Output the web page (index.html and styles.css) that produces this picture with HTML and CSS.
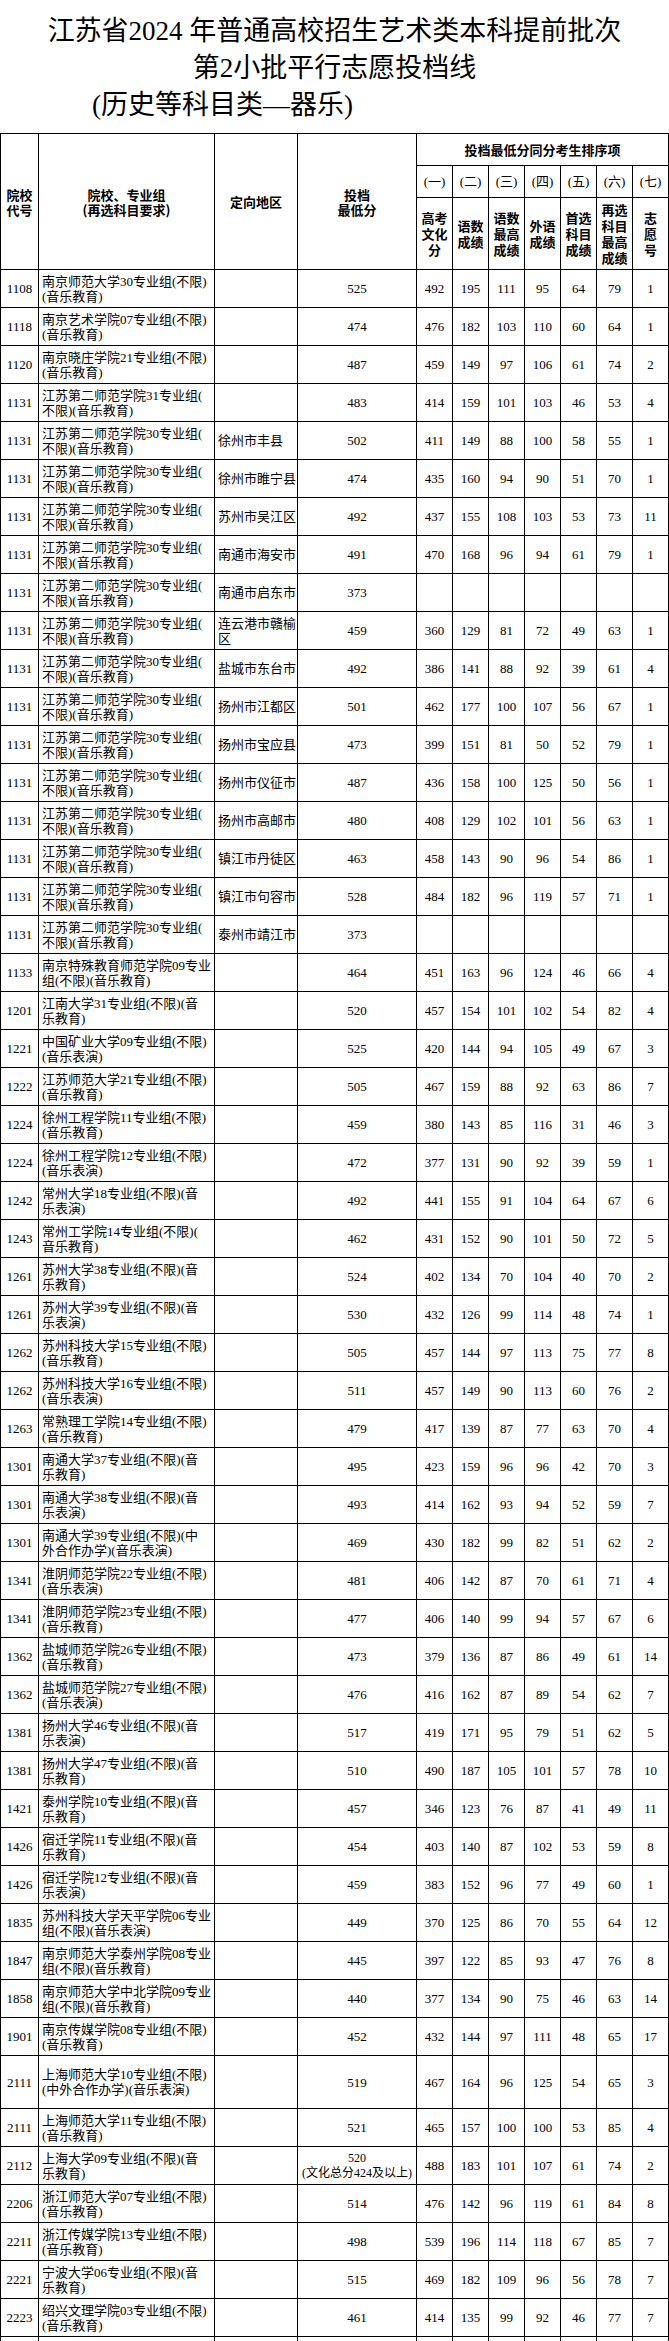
FILE: index.html
```html
<!DOCTYPE html>
<html lang="zh-CN">
<head>
<meta charset="utf-8">
<title>江苏省2024年普通高校招生艺术类本科提前批次第2小批平行志愿投档线</title>
<link rel="stylesheet" href="styles.css">
</head>
<body>
<div class="title">
  <div class="title-line">江苏省2024 年普通高校招生艺术类本科提前批次</div>
  <div class="title-line">第2小批平行志愿投档线</div>
  <div class="title-line sub">(历史等科目类—器乐)</div>
</div>
<table class="grid">
  <colgroup>
    <col class="c-code"><col class="c-name"><col class="c-region"><col class="c-score">
    <col class="c-n"><col class="c-n"><col class="c-n"><col class="c-n"><col class="c-n"><col class="c-n"><col class="c-n">
  </colgroup>
  <thead>
    <tr class="h1">
      <th rowspan="3" class="hl">院校<br>代号</th>
      <th rowspan="3" class="hl">院校、专业组<br>(再选科目要求)</th>
      <th rowspan="3" class="hl">定向地区</th>
      <th rowspan="3" class="hl">投档<br>最低分</th>
      <th colspan="7">投档最低分同分考生排序项</th>
    </tr>
    <tr class="h2">
      <th class="ord">(一)</th><th class="ord">(二)</th><th class="ord">(三)</th><th class="ord">(四)</th><th class="ord">(五)</th><th class="ord">(六)</th><th class="ord">(七)</th>
    </tr>
    <tr class="h3">
      <th class="lab">高考<br>文化<br>分</th>
      <th class="lab">语数<br>成绩</th>
      <th class="lab">语数<br>最高<br>成绩</th>
      <th class="lab">外语<br>成绩</th>
      <th class="lab">首选<br>科目<br>成绩</th>
      <th class="lab">再选<br>科目<br>最高<br>成绩</th>
      <th class="lab">志<br>愿<br>号</th>
    </tr>
  </thead>
  <tbody>
    <tr><td>1108</td><td class="name">南京师范大学30专业组(不限)<br>(音乐教育)</td><td class="region"></td><td>525</td><td>492</td><td>195</td><td>111</td><td>95</td><td>64</td><td>79</td><td>1</td></tr>
    <tr><td>1118</td><td class="name">南京艺术学院07专业组(不限)<br>(音乐教育)</td><td class="region"></td><td>474</td><td>476</td><td>182</td><td>103</td><td>110</td><td>60</td><td>64</td><td>1</td></tr>
    <tr><td>1120</td><td class="name">南京晓庄学院21专业组(不限)<br>(音乐教育)</td><td class="region"></td><td>487</td><td>459</td><td>149</td><td>97</td><td>106</td><td>61</td><td>74</td><td>2</td></tr>
    <tr><td>1131</td><td class="name">江苏第二师范学院31专业组(<br>不限)(音乐教育)</td><td class="region"></td><td>483</td><td>414</td><td>159</td><td>101</td><td>103</td><td>46</td><td>53</td><td>4</td></tr>
    <tr><td>1131</td><td class="name">江苏第二师范学院30专业组(<br>不限)(音乐教育)</td><td class="region">徐州市丰县</td><td>502</td><td>411</td><td>149</td><td>88</td><td>100</td><td>58</td><td>55</td><td>1</td></tr>
    <tr><td>1131</td><td class="name">江苏第二师范学院30专业组(<br>不限)(音乐教育)</td><td class="region">徐州市睢宁县</td><td>474</td><td>435</td><td>160</td><td>94</td><td>90</td><td>51</td><td>70</td><td>1</td></tr>
    <tr><td>1131</td><td class="name">江苏第二师范学院30专业组(<br>不限)(音乐教育)</td><td class="region">苏州市吴江区</td><td>492</td><td>437</td><td>155</td><td>108</td><td>103</td><td>53</td><td>73</td><td>11</td></tr>
    <tr><td>1131</td><td class="name">江苏第二师范学院30专业组(<br>不限)(音乐教育)</td><td class="region">南通市海安市</td><td>491</td><td>470</td><td>168</td><td>96</td><td>94</td><td>61</td><td>79</td><td>1</td></tr>
    <tr><td>1131</td><td class="name">江苏第二师范学院30专业组(<br>不限)(音乐教育)</td><td class="region">南通市启东市</td><td>373</td><td></td><td></td><td></td><td></td><td></td><td></td><td></td></tr>
    <tr><td>1131</td><td class="name">江苏第二师范学院30专业组(<br>不限)(音乐教育)</td><td class="region">连云港市赣榆<br>区</td><td>459</td><td>360</td><td>129</td><td>81</td><td>72</td><td>49</td><td>63</td><td>1</td></tr>
    <tr><td>1131</td><td class="name">江苏第二师范学院30专业组(<br>不限)(音乐教育)</td><td class="region">盐城市东台市</td><td>492</td><td>386</td><td>141</td><td>88</td><td>92</td><td>39</td><td>61</td><td>4</td></tr>
    <tr><td>1131</td><td class="name">江苏第二师范学院30专业组(<br>不限)(音乐教育)</td><td class="region">扬州市江都区</td><td>501</td><td>462</td><td>177</td><td>100</td><td>107</td><td>56</td><td>67</td><td>1</td></tr>
    <tr><td>1131</td><td class="name">江苏第二师范学院30专业组(<br>不限)(音乐教育)</td><td class="region">扬州市宝应县</td><td>473</td><td>399</td><td>151</td><td>81</td><td>50</td><td>52</td><td>79</td><td>1</td></tr>
    <tr><td>1131</td><td class="name">江苏第二师范学院30专业组(<br>不限)(音乐教育)</td><td class="region">扬州市仪征市</td><td>487</td><td>436</td><td>158</td><td>100</td><td>125</td><td>50</td><td>56</td><td>1</td></tr>
    <tr><td>1131</td><td class="name">江苏第二师范学院30专业组(<br>不限)(音乐教育)</td><td class="region">扬州市高邮市</td><td>480</td><td>408</td><td>129</td><td>102</td><td>101</td><td>56</td><td>63</td><td>1</td></tr>
    <tr><td>1131</td><td class="name">江苏第二师范学院30专业组(<br>不限)(音乐教育)</td><td class="region">镇江市丹徒区</td><td>463</td><td>458</td><td>143</td><td>90</td><td>96</td><td>54</td><td>86</td><td>1</td></tr>
    <tr><td>1131</td><td class="name">江苏第二师范学院30专业组(<br>不限)(音乐教育)</td><td class="region">镇江市句容市</td><td>528</td><td>484</td><td>182</td><td>96</td><td>119</td><td>57</td><td>71</td><td>1</td></tr>
    <tr><td>1131</td><td class="name">江苏第二师范学院30专业组(<br>不限)(音乐教育)</td><td class="region">泰州市靖江市</td><td>373</td><td></td><td></td><td></td><td></td><td></td><td></td><td></td></tr>
    <tr><td>1133</td><td class="name">南京特殊教育师范学院09专业<br>组(不限)(音乐教育)</td><td class="region"></td><td>464</td><td>451</td><td>163</td><td>96</td><td>124</td><td>46</td><td>66</td><td>4</td></tr>
    <tr><td>1201</td><td class="name">江南大学31专业组(不限)(音<br>乐教育)</td><td class="region"></td><td>520</td><td>457</td><td>154</td><td>101</td><td>102</td><td>54</td><td>82</td><td>4</td></tr>
    <tr><td>1221</td><td class="name">中国矿业大学09专业组(不限)<br>(音乐表演)</td><td class="region"></td><td>525</td><td>420</td><td>144</td><td>94</td><td>105</td><td>49</td><td>67</td><td>3</td></tr>
    <tr><td>1222</td><td class="name">江苏师范大学21专业组(不限)<br>(音乐教育)</td><td class="region"></td><td>505</td><td>467</td><td>159</td><td>88</td><td>92</td><td>63</td><td>86</td><td>7</td></tr>
    <tr><td>1224</td><td class="name">徐州工程学院11专业组(不限)<br>(音乐教育)</td><td class="region"></td><td>459</td><td>380</td><td>143</td><td>85</td><td>116</td><td>31</td><td>46</td><td>3</td></tr>
    <tr><td>1224</td><td class="name">徐州工程学院12专业组(不限)<br>(音乐表演)</td><td class="region"></td><td>472</td><td>377</td><td>131</td><td>90</td><td>92</td><td>39</td><td>59</td><td>1</td></tr>
    <tr><td>1242</td><td class="name">常州大学18专业组(不限)(音<br>乐表演)</td><td class="region"></td><td>492</td><td>441</td><td>155</td><td>91</td><td>104</td><td>64</td><td>67</td><td>6</td></tr>
    <tr><td>1243</td><td class="name">常州工学院14专业组(不限)(<br>音乐教育)</td><td class="region"></td><td>462</td><td>431</td><td>152</td><td>90</td><td>101</td><td>50</td><td>72</td><td>5</td></tr>
    <tr><td>1261</td><td class="name">苏州大学38专业组(不限)(音<br>乐教育)</td><td class="region"></td><td>524</td><td>402</td><td>134</td><td>70</td><td>104</td><td>40</td><td>70</td><td>2</td></tr>
    <tr><td>1261</td><td class="name">苏州大学39专业组(不限)(音<br>乐表演)</td><td class="region"></td><td>530</td><td>432</td><td>126</td><td>99</td><td>114</td><td>48</td><td>74</td><td>1</td></tr>
    <tr><td>1262</td><td class="name">苏州科技大学15专业组(不限)<br>(音乐教育)</td><td class="region"></td><td>505</td><td>457</td><td>144</td><td>97</td><td>113</td><td>75</td><td>77</td><td>8</td></tr>
    <tr><td>1262</td><td class="name">苏州科技大学16专业组(不限)<br>(音乐表演)</td><td class="region"></td><td>511</td><td>457</td><td>149</td><td>90</td><td>113</td><td>60</td><td>76</td><td>2</td></tr>
    <tr><td>1263</td><td class="name">常熟理工学院14专业组(不限)<br>(音乐教育)</td><td class="region"></td><td>479</td><td>417</td><td>139</td><td>87</td><td>77</td><td>63</td><td>70</td><td>4</td></tr>
    <tr><td>1301</td><td class="name">南通大学37专业组(不限)(音<br>乐教育)</td><td class="region"></td><td>495</td><td>423</td><td>159</td><td>96</td><td>96</td><td>42</td><td>70</td><td>3</td></tr>
    <tr><td>1301</td><td class="name">南通大学38专业组(不限)(音<br>乐表演)</td><td class="region"></td><td>493</td><td>414</td><td>162</td><td>93</td><td>94</td><td>52</td><td>59</td><td>7</td></tr>
    <tr><td>1301</td><td class="name">南通大学39专业组(不限)(中<br>外合作办学)(音乐表演)</td><td class="region"></td><td>469</td><td>430</td><td>182</td><td>99</td><td>82</td><td>51</td><td>62</td><td>2</td></tr>
    <tr><td>1341</td><td class="name">淮阴师范学院22专业组(不限)<br>(音乐表演)</td><td class="region"></td><td>481</td><td>406</td><td>142</td><td>87</td><td>70</td><td>61</td><td>71</td><td>4</td></tr>
    <tr><td>1341</td><td class="name">淮阴师范学院23专业组(不限)<br>(音乐教育)</td><td class="region"></td><td>477</td><td>406</td><td>140</td><td>99</td><td>94</td><td>57</td><td>67</td><td>6</td></tr>
    <tr><td>1362</td><td class="name">盐城师范学院26专业组(不限)<br>(音乐教育)</td><td class="region"></td><td>473</td><td>379</td><td>136</td><td>87</td><td>86</td><td>49</td><td>61</td><td>14</td></tr>
    <tr><td>1362</td><td class="name">盐城师范学院27专业组(不限)<br>(音乐表演)</td><td class="region"></td><td>476</td><td>416</td><td>162</td><td>87</td><td>89</td><td>54</td><td>62</td><td>7</td></tr>
    <tr><td>1381</td><td class="name">扬州大学46专业组(不限)(音<br>乐表演)</td><td class="region"></td><td>517</td><td>419</td><td>171</td><td>95</td><td>79</td><td>51</td><td>62</td><td>5</td></tr>
    <tr><td>1381</td><td class="name">扬州大学47专业组(不限)(音<br>乐教育)</td><td class="region"></td><td>510</td><td>490</td><td>187</td><td>105</td><td>101</td><td>57</td><td>78</td><td>10</td></tr>
    <tr><td>1421</td><td class="name">泰州学院10专业组(不限)(音<br>乐教育)</td><td class="region"></td><td>457</td><td>346</td><td>123</td><td>76</td><td>87</td><td>41</td><td>49</td><td>11</td></tr>
    <tr><td>1426</td><td class="name">宿迁学院11专业组(不限)(音<br>乐教育)</td><td class="region"></td><td>454</td><td>403</td><td>140</td><td>87</td><td>102</td><td>53</td><td>59</td><td>8</td></tr>
    <tr><td>1426</td><td class="name">宿迁学院12专业组(不限)(音<br>乐表演)</td><td class="region"></td><td>459</td><td>383</td><td>152</td><td>96</td><td>77</td><td>49</td><td>60</td><td>1</td></tr>
    <tr><td>1835</td><td class="name">苏州科技大学天平学院06专业<br>组(不限)(音乐表演)</td><td class="region"></td><td>449</td><td>370</td><td>125</td><td>86</td><td>70</td><td>55</td><td>64</td><td>12</td></tr>
    <tr><td>1847</td><td class="name">南京师范大学泰州学院08专业<br>组(不限)(音乐教育)</td><td class="region"></td><td>445</td><td>397</td><td>122</td><td>85</td><td>93</td><td>47</td><td>76</td><td>8</td></tr>
    <tr><td>1858</td><td class="name">南京师范大学中北学院09专业<br>组(不限)(音乐教育)</td><td class="region"></td><td>440</td><td>377</td><td>134</td><td>90</td><td>75</td><td>46</td><td>63</td><td>14</td></tr>
    <tr><td>1901</td><td class="name">南京传媒学院08专业组(不限)<br>(音乐教育)</td><td class="region"></td><td>452</td><td>432</td><td>144</td><td>97</td><td>111</td><td>48</td><td>65</td><td>17</td></tr>
    <tr class="tall"><td>2111</td><td class="name">上海师范大学10专业组(不限)<br>(中外合作办学)(音乐表演)</td><td class="region"></td><td>519</td><td>467</td><td>164</td><td>96</td><td>125</td><td>54</td><td>65</td><td>3</td></tr>
    <tr><td>2111</td><td class="name">上海师范大学11专业组(不限)<br>(音乐教育)</td><td class="region"></td><td>521</td><td>465</td><td>157</td><td>100</td><td>100</td><td>53</td><td>85</td><td>4</td></tr>
    <tr><td>2112</td><td class="name">上海大学09专业组(不限)(音<br>乐教育)</td><td class="region"></td><td class="small">520<br>(文化总分424及以上)</td><td>488</td><td>183</td><td>101</td><td>107</td><td>61</td><td>74</td><td>2</td></tr>
    <tr><td>2206</td><td class="name">浙江师范大学07专业组(不限)<br>(音乐教育)</td><td class="region"></td><td>514</td><td>476</td><td>142</td><td>96</td><td>119</td><td>61</td><td>84</td><td>8</td></tr>
    <tr><td>2211</td><td class="name">浙江传媒学院13专业组(不限)<br>(音乐教育)</td><td class="region"></td><td>498</td><td>539</td><td>196</td><td>114</td><td>118</td><td>67</td><td>85</td><td>7</td></tr>
    <tr><td>2221</td><td class="name">宁波大学06专业组(不限)(音<br>乐教育)</td><td class="region"></td><td>515</td><td>469</td><td>182</td><td>109</td><td>96</td><td>56</td><td>78</td><td>7</td></tr>
    <tr><td>2223</td><td class="name">绍兴文理学院03专业组(不限)<br>(音乐教育)</td><td class="region"></td><td>461</td><td>414</td><td>135</td><td>99</td><td>92</td><td>46</td><td>77</td><td>7</td></tr>
    <tr><td></td><td class="name"></td><td class="region"></td><td></td><td></td><td></td><td></td><td></td><td></td><td></td><td></td></tr>
  </tbody>
</table>
</body>
</html>
```
FILE: styles.css
```css
html, body {
  margin: 0;
  padding: 0;
  background: #ffffff;
  color: #000000;
}

body {
  font-family: "Liberation Serif", "Noto Sans CJK SC", serif;
}

.title {
  padding: 13px 0 9px;
  font-family: "Liberation Serif", "Noto Sans CJK SC", sans-serif;
  font-size: 27px;
  line-height: 37px;
  height: 111px;
}

.title-line {
  text-align: center;
  white-space: nowrap;
}

.title-line.sub {
  text-align: left;
  padding-left: 92px;
}

.grid {
  border-collapse: collapse;
  table-layout: fixed;
  width: 668px;
  margin: 0;
}

.c-code { width: 38px; }
.c-name { width: 176px; }
.c-region { width: 83px; }
.c-score { width: 119px; }
.c-n { width: 36px; }

.grid th,
.grid td {
  border: 1px solid #000000;
  padding: 0;
  vertical-align: middle;
  text-align: center;
  white-space: nowrap;
  overflow: hidden;
}

.grid th {
  font-family: "Noto Sans CJK SC", sans-serif;
  font-weight: 700;
  font-size: 13px;
  line-height: 15px;
}

.grid th.ord {
  font-family: "Liberation Serif", "Noto Sans CJK SC", serif;
  font-weight: 400;
  font-size: 13px;
}

.grid th.lab {
  line-height: 16px;
}

.h1 { height: 32px; }
.h2 { height: 32px; }
.h3 { height: 72px; }

.grid td {
  font-size: 13px;
  line-height: 15px;
  font-weight: 400;
}

.grid tbody tr {
  height: 38px;
}

.grid tbody tr.tall {
  height: 53px;
}

.grid td.name,
.grid td.region {
  text-align: left;
  padding-left: 3px;
}

.grid td.small {
  font-size: 12px;
  line-height: 15px;
}
```
